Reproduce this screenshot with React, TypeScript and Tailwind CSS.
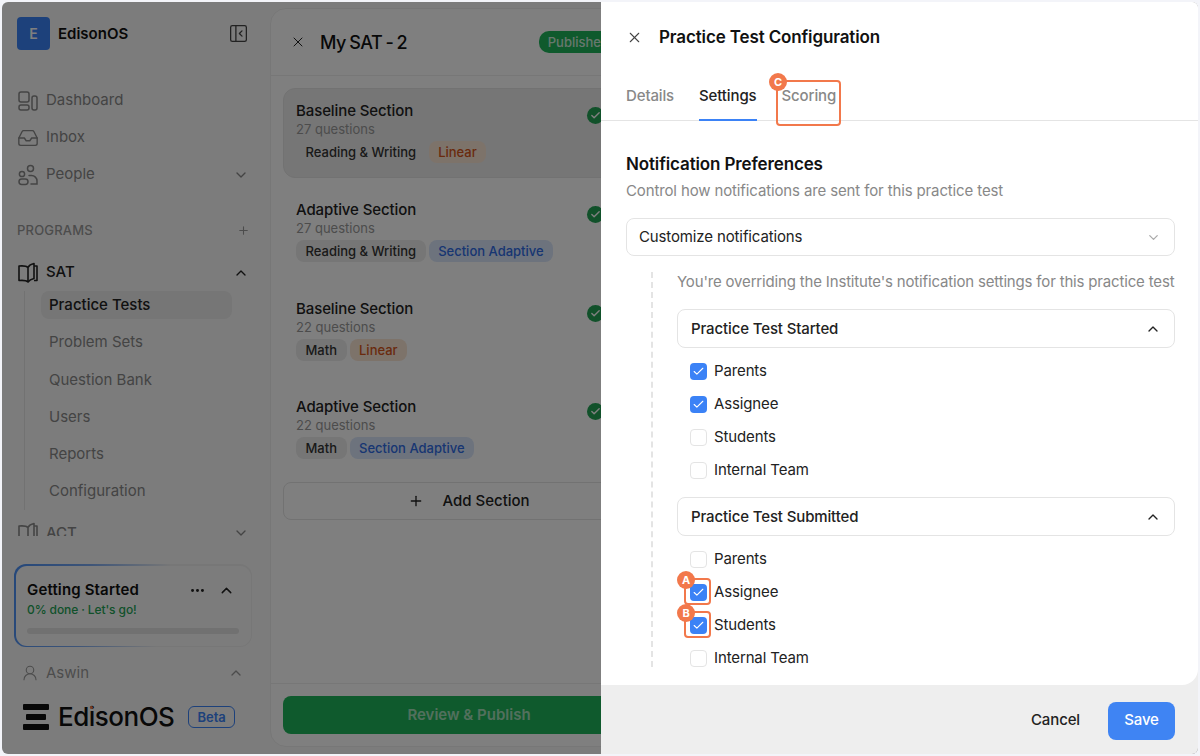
import { Check, ChevronDown, ChevronUp, Ellipsis, Inbox, PanelLeftClose, Plus, UserRound, X } from 'lucide-react'

const DashboardIcon = () => (
  <svg width="22" height="22" viewBox="0 0 22 22" fill="none" stroke="currentColor" strokeWidth="1.5">
    <rect x="2" y="2" width="10" height="10" rx="2" />
    <rect x="2" y="15" width="10" height="5" rx="2" />
    <rect x="15" y="6" width="5" height="14" rx="2" />
  </svg>
)

const PeopleIcon = () => (
  <svg width="22" height="22" viewBox="0 0 22 22" fill="none" stroke="currentColor" strokeWidth="1.5">
    <circle cx="13.5" cy="4.5" r="3" />
    <circle cx="5" cy="10" r="2.6" />
    <path d="M12 11.5h2.5a5.5 5.5 0 0 1 5.5 5.5v3h-6" strokeLinecap="round" />
    <rect x="2" y="15" width="9" height="5.5" rx="2.7" />
  </svg>
)

const BookIcon = () => (
  <svg width="22" height="22" viewBox="0 0 22 22" fill="none" stroke="currentColor" strokeWidth="1.6" strokeLinejoin="round">
    <path d="M11 5.500C9.500 4 7 3.500 2 4v14.500c5-.5 7.500 0 9 1.500V5.500Z" />
    <path d="M11 5.500c1-2 3.500-3.500 6-4v15c-2.500.5-5 2-6 3.500" />
    <path d="M17 4h3v14.500h-3" />
  </svg>
)

const LogoMark = () => (
  <svg width="26" height="26" viewBox="0 0 26 26" fill="#111">
    <rect x="0" y="0" width="26" height="6" rx="1" />
    <rect x="3" y="10" width="20" height="6" rx="1" />
    <rect x="0" y="20" width="26" height="6" rx="1" />
  </svg>
)

const subItems = ['Problem Sets', 'Question Bank', 'Users', 'Reports', 'Configuration']

function Sidebar() {
  return (
    <aside className="flex h-full w-[268px] shrink-0 flex-col bg-[#f9f9f9]">
      <div className="flex items-center justify-between pl-[15px] pr-[21px] pt-[15px]">
        <div className="flex items-center gap-[8px]">
          <div className="flex h-[33px] w-[33px] items-center justify-center rounded-[4px] bg-[#3b82f6] text-[14px] font-semibold text-white">E</div>
          <span className="pt-[1px] text-[15px] font-semibold text-[#111]">EdisonOS</span>
        </div>
        <PanelLeftClose size={21} strokeWidth={1.5} className="text-[#444]" />
      </div>

      <nav className="mt-[32px] flex h-[454px] shrink-0 flex-col overflow-hidden pl-[15px] pr-[21px] text-[15px] text-[#888]">
        <div className="flex h-[37px] shrink-0 items-center gap-[7px]"><DashboardIcon />Dashboard</div>
        <div className="flex h-[37px] shrink-0 items-center gap-[7px]"><Inbox size={22} strokeWidth={1.5} />Inbox</div>
        <div className="flex h-[37px] shrink-0 items-center gap-[7px]"><PeopleIcon />People<ChevronDown size={16} className="ml-auto" /></div>
        <div className="mt-[19px] flex h-[37px] shrink-0 items-center justify-between text-[13px] font-medium tracking-[0.2px] text-[#999]">
          PROGRAMS<Plus size={13} strokeWidth={2} className="-mr-[1px]" />
        </div>
        <div className="mt-[5px] flex h-[37px] shrink-0 items-center gap-[7px] font-medium text-[#222]"><BookIcon />SAT<ChevronUp size={16} className="ml-auto" /></div>
        <div className="ml-[7px] shrink-0 border-l border-[#e4e4e4] pl-[16px]">
          <div className="mb-[5px] flex h-[28px] w-[191px] items-center rounded-[8px] bg-[#ececec] pl-[8px] font-medium text-[#222]">Practice Tests</div>
          {subItems.map(item => (
            <div key={item} className="flex h-[37.250px] items-center pl-[8px]">{item}</div>
          ))}
        </div>
        <div className="mt-[4px] flex h-[37px] shrink-0 items-center gap-[7px] font-medium text-[#888]"><BookIcon />ACT<ChevronDown size={16} className="ml-auto" /></div>
      </nav>

      <div className="ml-[12px] mt-[28px] w-[238px] rounded-[12px] bg-[linear-gradient(100deg,#4a8ff5_0%,#7ba9f0_30%,#eeeeee_62%)] p-[1.500px]">
        <div className="h-[80px] rounded-[11px] bg-[#f9f9f9] pl-[11.500px] pr-[12px] pt-[14.500px]">
          <div className="flex items-center justify-between">
            <span className="text-[15px] font-semibold leading-[20px] tracking-[0.15px] text-[#111]">Getting Started</span>
            <div className="flex items-center gap-[12px] pr-[4px] text-[#222]">
              <Ellipsis size={17} strokeWidth={2.2} />
              <ChevronUp size={17} />
            </div>
          </div>
          <div className="text-[12px] font-medium leading-[20px] tracking-[-0.1px] text-[#22a355]">0% done · Let's go!</div>
          <div className="mt-[8px] h-[6px] rounded-full bg-[#e2e2e2]" />
        </div>
      </div>

      <div className="mt-[15px] flex items-center gap-[7px] pl-[19px] pr-[26px] text-[15px] text-[#999]">
        <UserRound size={18} strokeWidth={1.5} />Aswin<ChevronUp size={16} className="ml-auto" />
      </div>

      <div className="mt-[16px] flex items-center pl-[21px]">
        <LogoMark />
        <span className="relative ml-[9px] text-[26px] font-medium leading-[32px] tracking-[-0.5px] text-[#111]">
          EdisonOS
          <span className="absolute left-[32px] top-[5px] h-[3px] w-[3px] rounded-full bg-[#f2784b]" />
        </span>
        <span className="ml-[14px] rounded-[6px] border border-[#3b82f6] px-[8px] text-[13px] font-semibold leading-[20px] text-[#3b82f6]">Beta</span>
      </div>
    </aside>
  )
}

const chipColors = {
  gray: 'bg-[#ececec] text-[#333]',
  orange: 'bg-[#fbe6d5] text-[#d4551a]',
  blue: 'bg-[#dbe6fb] text-[#2f6ce5]',
}

function Chip({ label, color, plain }: { label: string; color: keyof typeof chipColors; plain?: boolean }) {
  return (
    <span className={`rounded-[8px] px-[9.500px] text-[13px] font-medium leading-[22px] ${plain ? 'bg-transparent text-[#333]' : chipColors[color]}`}>
      {label}
    </span>
  )
}

const sections = [
  { title: 'Baseline Section', count: '27 questions', tag: 'Reading & Writing', kind: 'Linear' },
  { title: 'Adaptive Section', count: '27 questions', tag: 'Reading & Writing', kind: 'Section Adaptive' },
  { title: 'Baseline Section', count: '22 questions', tag: 'Math', kind: 'Linear' },
  { title: 'Adaptive Section', count: '22 questions', tag: 'Math', kind: 'Section Adaptive' },
]

function MainPanel() {
  return (
    <main className="mb-[7px] mt-[6px] flex w-[398px] shrink-0 flex-col rounded-[16px] border border-[#eeeeee] bg-white">
      <div className="flex h-[67px] shrink-0 items-center border-b border-[#eeeeee] pl-[19px] pr-[49px]">
        <X size={16} strokeWidth={1.5} className="text-[#222]" />
        <span className="ml-[14px] text-[18px] font-medium tracking-[-0.5px] [word-spacing:-1px] text-[#111]">My SAT - 2</span>
        <span className="ml-auto rounded-[10px] bg-[#1fb45a] px-[9px] text-[13px] font-medium leading-[22px] text-[#cfeedd]">Published</span>
      </div>

      <div className="flex flex-1 flex-col px-[12px] pt-[12px]">
        <div className="flex flex-col">
          {sections.map((s, i) => (
            <div key={i} className={`mb-[8.500px] flex h-[90px] justify-between rounded-[12px] ${i === 0 ? 'border border-[#e4e4e4] bg-[#ececec] pl-[12px] pr-[12px] pt-[12px]' : 'px-[13px] pt-[13.500px]'}`}>
              <div>
                <div className="text-[15px] font-medium leading-[20px] tracking-[-0.1px] text-[#222]">{s.title}</div>
                <div className="text-[13px] leading-[17px] text-[#999]">{s.count}</div>
                <div className="mt-[3px] flex gap-[3px]">
                  <Chip label={s.tag} color="gray" plain={i === 0} />
                  <Chip label={s.kind} color={s.kind === 'Linear' ? 'orange' : 'blue'} />
                </div>
              </div>
              <div className="mr-[38px] mt-[6px] flex h-[17px] w-[17px] items-center justify-center rounded-full bg-[#22a355] text-white">
                <Check size={11} strokeWidth={3} />
              </div>
            </div>
          ))}
        </div>
        <div className="flex h-[38px] items-center justify-center gap-[18px] rounded-[8px] border border-[#e4e4e4] text-[15px] font-medium text-[#222]">
          <Plus size={16} />Add Section
        </div>
      </div>

      <div className="h-[63px] shrink-0 border-t border-[#eeeeee] px-[12px] pt-[12px]">
        <div className="flex h-[38px] w-full items-center justify-center rounded-[8px] bg-[#1fb45a] text-[15px] font-semibold text-white/60">
          Review &amp; Publish
        </div>
      </div>
    </main>
  )
}

function Box({ checked, label }: { checked?: boolean; label: string }) {
  return (
    <label className="flex h-[17px] items-center gap-[7px] pl-[13px] text-[15px] text-[#222]">
      <span className={`flex h-[17px] w-[17px] shrink-0 items-center justify-center rounded-[4px] ${checked ? 'bg-[#3b82f6]' : 'border border-[#e4e4e4] bg-white'}`}>
        {checked && <Check size={13} strokeWidth={2} className="text-white" />}
      </span>
      {label}
    </label>
  )
}

function Group({ title, rows }: { title: string; rows: { label: string; checked?: boolean }[] }) {
  return (
    <div>
      <div className="flex h-[39px] items-center justify-between rounded-[8px] border border-[#e4e4e4] pl-[13px] pr-[13px] pt-[1px] text-[15px] font-medium text-[#222]">
        {title}<ChevronUp size={16} className="text-[#222]" />
      </div>
      <div className="mt-[15px] flex flex-col gap-[16px]">
        {rows.map(r => <Box key={r.label} {...r} />)}
      </div>
    </div>
  )
}

function Marker({ letter, className }: { letter: string; className: string }) {
  return (
    <div className={`absolute rounded-[4px] border-2 border-[#f2784b] ${className}`}>
      <span className="absolute -left-[9px] -top-[9px] flex h-[18px] w-[18px] items-center justify-center rounded-full bg-[#f2784b] text-[11px] font-bold text-white">
        {letter}
      </span>
    </div>
  )
}

function Drawer() {
  return (
    <section className="absolute bottom-0 right-0 top-0 flex w-[597px] flex-col bg-[#eeeeee] tracking-[-0.13px]">
      <div className="flex h-[683px] shrink-0 flex-col overflow-hidden rounded-br-[16px] bg-white">
        <div className="flex items-center pl-[25px] pt-[24px]">
          <X size={17} strokeWidth={1.5} className="text-[#444]" />
          <span className="ml-[16px] text-[17px] font-semibold leading-[22px] text-[#111]">Practice Test Configuration</span>
        </div>
        <div className="mt-[23px] flex h-[50px] shrink-0 gap-[25px] border-b border-[#e4e4e4] pl-[25px] text-[15px] font-medium">
          <span className="pt-[14px] text-[#888]">Details</span>
          <span className="h-[50px] border-b-2 border-[#3b82f6] pt-[14px] text-[#222]">Settings</span>
          <span className="pt-[14px] text-[#888]">Scoring</span>
        </div>

        <div className="pl-[25px] pr-[23px] pt-[32px]">
          <h2 className="text-[17px] font-semibold leading-[22px] text-[#111]">Notification Preferences</h2>
          <p className="mt-[5px] text-[15px] leading-[22px] text-[#888]">Control how notifications are sent for this practice test</p>
          <div className="mt-[16px] flex h-[38px] items-center justify-between rounded-[8px] border border-[#e4e4e4] pl-[12px] pr-[13px] text-[15px] text-[#222]">
            Customize notifications<ChevronDown size={15} className="text-[#aaa]" />
          </div>

          <div className="ml-[25px] mt-[16px] border-l-2 border-dashed border-[#e4e4e4] pl-[24px]">
            <p className="whitespace-nowrap text-[15px] leading-[20px] tracking-[-0.17px] text-[#888]">You're overriding the Institute's notification settings for this practice test</p>
            <div className="mt-[17px] flex flex-col gap-[18px]">
              <Group
                title="Practice Test Started"
                rows={[
                  { label: 'Parents', checked: true },
                  { label: 'Assignee', checked: true },
                  { label: 'Students' },
                  { label: 'Internal Team' },
                ]}
              />
              <Group
                title="Practice Test Submitted"
                rows={[
                  { label: 'Parents' },
                  { label: 'Assignee', checked: true },
                  { label: 'Students', checked: true },
                  { label: 'Internal Team' },
                ]}
              />
            </div>
          </div>
        </div>
      </div>

      <div className="flex flex-1 items-center justify-end gap-[28px] pr-[23px] pt-[2px] text-[15px] font-medium">
        <span className="text-[#222]">Cancel</span>
        <span className="flex h-[38px] w-[67px] items-center justify-center rounded-[8px] bg-[#3f84f3] text-white">Save</span>
      </div>

      <Marker letter="C" className="left-[175px] top-[78px] h-[46px] w-[65px]" />
      <Marker letter="A" className="left-[83px] top-[576px] h-[27px] w-[27px]" />
      <Marker letter="B" className="left-[83px] top-[609px] h-[27px] w-[27px]" />
    </section>
  )
}

export default function App() {
  return (
    <div className="h-[756px] w-[1200px] bg-[#f3f4f9] p-[2px] font-['Inter',sans-serif]">
      <div className="relative h-full overflow-hidden rounded-[6px]">
        <div className="flex h-full bg-[#f9f9f9]">
          <Sidebar />
          <MainPanel />
        </div>
        <div className="absolute inset-0 bg-black/50" />
        <Drawer />
      </div>
    </div>
  )
}
